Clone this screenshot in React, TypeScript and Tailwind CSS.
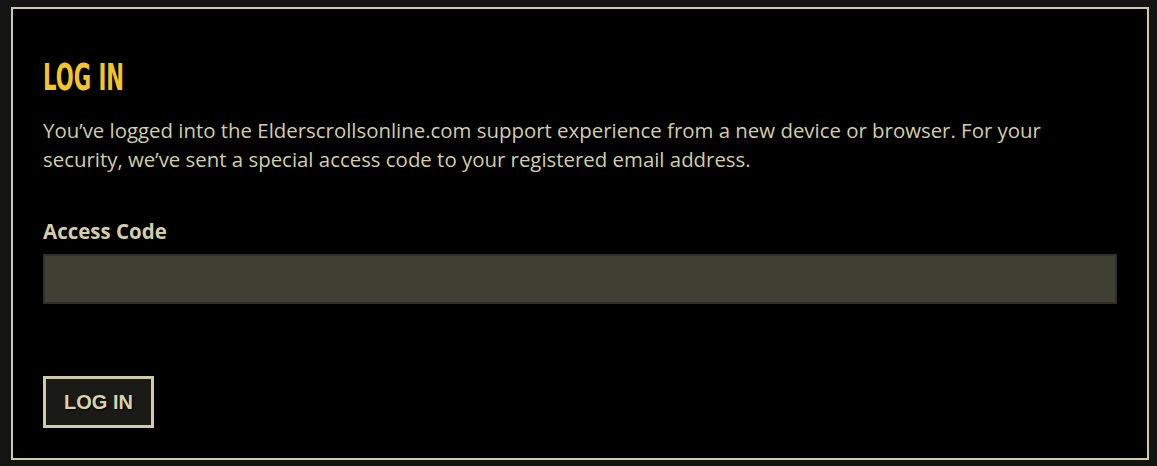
export default function App() {
  return (
    <div className="min-h-screen bg-[#141413] pt-[7px] pl-[11px] pr-[8px] pb-[6px]">
      <div className="h-[453px] border-2 border-[#cfcba6] bg-black px-[30px] pt-[48px]">
        <h1 className="origin-left scale-x-[0.62] text-[38px] leading-[40px] font-bold text-[#f4c52a] font-['Liberation_Sans_Narrow','DejaVu_Sans_Condensed',sans-serif] whitespace-nowrap">
          LOG IN
        </h1>
        <p className="mt-[19px] max-w-[1045px] text-[20.4px] leading-[29px] text-[#d3cea7] font-['Open_Sans',sans-serif]">
          You’ve logged into the Elderscrollsonline.com support experience from a new device or browser. For your
          security, we’ve sent a special access code to your registered email address.
        </p>
        <label className="mt-[44px] block text-[20.5px] leading-[26px] font-bold text-[#d3cea7] font-['Open_Sans',sans-serif]">
          Access Code
        </label>
        <input
          type="text"
          className="mt-[10px] block h-[50px] w-full border-2 border-[#2f2f2b] bg-[#3f3f33] outline-none"
        />
        <button className="mt-[72px] h-[52px] w-[111px] border-[3px] border-[#cfcba6] bg-[#1a1a17] text-[20px] font-bold text-[#d8d3ab] font-['Liberation_Sans',Arial,sans-serif] [text-shadow:1px_1px_2px_#000]">
          LOG IN
        </button>
      </div>
    </div>
  );
}
